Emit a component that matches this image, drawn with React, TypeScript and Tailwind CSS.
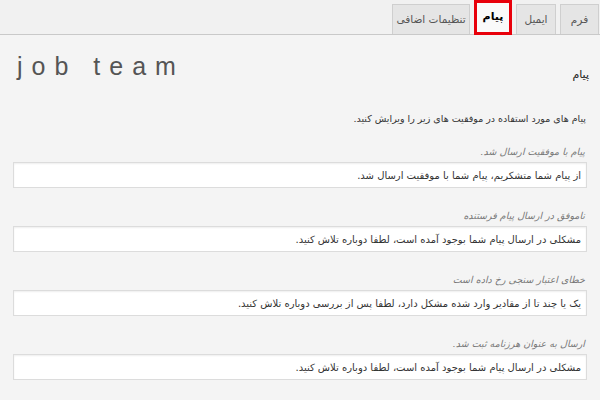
const tabs = [
  { label: "فرم", active: false, w: "w-[39px]" },
  { label: "ایمیل", active: false, w: "w-[40px]" },
  { label: "پیام", active: true, w: "w-[38px]" },
  { label: "تنظیمات اضافی", active: false, w: "w-[78px]" },
];

const fields = [
  {
    label: "پیام با موفقیت ارسال شد.",
    value: "از پیام شما متشکریم، پیام شما با موفقیت ارسال شد.",
  },
  {
    label: "ناموفق در ارسال پیام فرستنده",
    value: "مشکلی در ارسال پیام شما بوجود آمده است، لطفا دوباره تلاش کنید.",
  },
  {
    label: "خطای اعتبار سنجی رخ داده است",
    value: "یک یا چند تا از مقادیر وارد شده مشکل دارد، لطفا پس از بررسی دوباره تلاش کنید.",
  },
  {
    label: "ارسال به عنوان هرزنامه ثبت شد.",
    value: "مشکلی در ارسال پیام شما بوجود آمده است، لطفا دوباره تلاش کنید.",
  },
];

export default function App() {
  return (
    <div
      dir="rtl"
      className="w-[600px] h-[400px] overflow-hidden bg-[#f4f4f4] text-[#333] font-['DejaVu_Sans',sans-serif]"
    >
      {/* tab strip */}
      <div className="flex items-end gap-[4px] h-[35px] pr-[1px] bg-[#f1f1f1] border-b border-[#c9c9c9]">
        {tabs.map((t) =>
          t.active ? (
            <div
              key={t.label}
              className={`${t.w} h-[35px] -mb-px flex items-center justify-center whitespace-nowrap bg-[#fafafa] border-[3px] border-[#e8000b] text-[11px] font-bold text-black`}
            >
              {t.label}
            </div>
          ) : (
            <div
              key={t.label}
              className={`${t.w} h-[30px] flex items-center justify-center whitespace-nowrap bg-[#e5e5e5] border border-b-0 border-[#cfcfcf] text-[10.5px] text-[#555]`}
            >
              {t.label}
            </div>
          )
        )}
      </div>

      <div className="px-[13px]">
        <div className="mt-[14px] h-[34px] flex items-end justify-between">
          <div className="-mr-[2px] text-[11px] leading-[16px] text-[#1a1a1a]">پیام</div>
          <div
            dir="ltr"
            className="self-stretch pl-[4px] text-[25px] leading-[34px] tracking-[9px] text-[#555] font-['Liberation_Sans',sans-serif]"
          >
            job team
          </div>
        </div>

        <p className="mt-[28px] pr-[1px] text-[9.5px] leading-[16px] text-[#333]">
          پیام های مورد استفاده در موفقیت های زیر را ویرایش کنید.
        </p>

        <div className="mt-[17px] flex flex-col gap-[20px]">
          {fields.map((f) => (
            <div key={f.label}>
              <div className="pr-[2px] text-[9.5px] leading-[16px] italic text-[#777]">{f.label}</div>
              <div className="mt-[2px] h-[26px] flex items-center px-[5px] bg-white border border-[#dcdcdc] shadow-[inset_0_1px_2px_rgba(0,0,0,0.07)] text-[10px] text-[#333]">
                {f.value}
              </div>
            </div>
          ))}
        </div>
      </div>
    </div>
  );
}
